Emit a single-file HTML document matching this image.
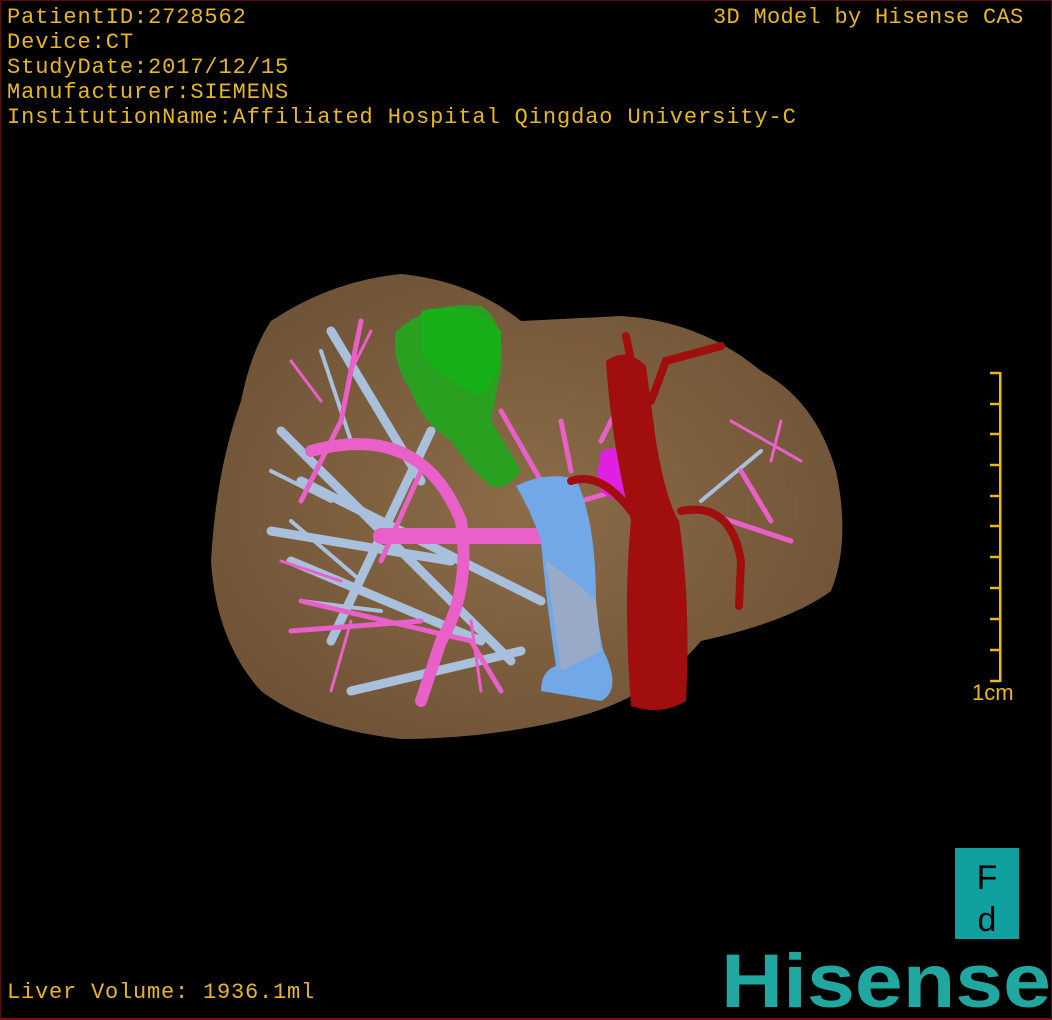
<!DOCTYPE html>
<html><head><meta charset="utf-8"><style>
html,body{margin:0;padding:0;background:#000;}
#f{position:relative;width:1052px;height:1020px;background:#000;overflow:hidden;box-sizing:border-box;border:1px solid #5a0e0e;border-bottom:2px solid #7a1010;}
.t{position:absolute;color:#e8b818;font-family:"Liberation Mono","DejaVu Sans Mono",monospace;font-size:22px;line-height:25px;white-space:pre;letter-spacing:0.9px;}
</style></head><body><div id="f">
<div class="t" style="left:6px;top:4px;">PatientID:2728562
Device:CT
StudyDate:2017/12/15
Manufacturer:SIEMENS
InstitutionName:Affiliated Hospital Qingdao University-C</div>
<div class="t" style="left:712px;top:4px;letter-spacing:0.3px;">3D Model by Hisense CAS</div>
<div class="t" style="left:6px;top:979px;letter-spacing:0.8px;">Liver Volume: 1936.1ml</div>
<svg width="1052" height="1020" style="position:absolute;left:0;top:0">
<defs><radialGradient id="lg" cx="0.5" cy="0.5" r="0.6"><stop offset="0" stop-color="#8c6c48"/><stop offset="1" stop-color="#6e5236"/></radialGradient></defs>
<path d="M270,320 Q330,280 400,273 Q470,280 520,320 Q560,318 620,315 Q700,320 760,370 Q815,400 835,470 Q850,540 830,590 Q790,620 700,640 Q650,700 560,720 Q480,738 400,738 Q310,728 260,690 Q215,640 210,560 Q215,470 240,400 Q250,350 270,320Z" fill="url(#lg)"/>
<g stroke="#a8c0dc" stroke-linecap="round" fill="none">
<path d="M330,640 L430,430 M280,430 L510,660 M300,480 L540,600 M330,330 L420,480 M290,560 L480,640 M350,690 L520,650 M270,530 L450,560" stroke-width="9"/>
<path d="M290,520 L360,580 M300,600 L380,610 M320,350 L350,440 M270,470 L330,500 M700,500 L760,450" stroke-width="4"/>
</g>
<g stroke="#e860c8" stroke-linecap="round" fill="none">
<path d="M310,450 Q420,420 460,520 Q470,590 440,640 L420,700" stroke-width="12"/>
<path d="M380,535 L540,535" stroke-width="16"/>
<path d="M360,320 L340,420 L300,500 M300,600 L470,640 L500,690 M290,630 L420,620 M420,470 L380,560 M500,410 L540,480 M560,420 L570,470 M630,380 L600,440 M700,510 L790,540 M740,470 L770,520 M580,500 L650,480" stroke-width="5"/>
<path d="M290,360 L320,400 M370,330 L350,370 M280,560 L340,580 M330,690 L350,620 M480,690 L470,620 M730,420 L800,460 M770,460 L780,420" stroke-width="3"/>
</g>
<path d="M600,450 Q630,440 640,460 L630,500 Q600,500 595,480Z" fill="#e020e0"/>
<path d="M395,330 Q430,300 480,305 Q505,320 500,370 L490,420 Q515,460 520,470 Q505,490 490,485 Q470,470 450,440 Q420,420 410,390 Q390,360 395,330Z" fill="#2aa020"/>
<path d="M420,310 Q470,298 500,330 Q500,380 480,395 Q440,380 420,350Z" fill="#18b018"/>
<path d="M515,485 Q545,470 575,478 Q595,520 595,600 Q600,650 605,655 Q620,690 600,700 Q570,695 540,690 Q540,670 555,665 Q545,600 540,540 Q530,510 515,485Z" fill="#72a8e8"/>
<path d="M545,560 Q575,580 595,600 L600,650 L560,670 Z" fill="#98aac8"/>
<path d="M605,360 Q625,345 645,365 L655,440 Q665,500 678,520 Q690,600 685,700 Q660,715 630,705 Q622,600 630,520 Q610,440 605,360Z" fill="#a00e0e"/>
<g stroke="#a00e0e" stroke-linecap="round" fill="none" stroke-width="8">
<path d="M625,335 L630,360 M650,400 L665,360 L720,345 M680,510 Q730,500 740,560 L738,605 M630,510 Q600,470 570,480"/>
</g>
<rect x="998" y="371" width="2.5" height="310" fill="#e8b818"/>
<g stroke="#e8b818" stroke-width="2.5">
<path d="M989,372H999M989,403H999M989,433H999M989,464H999M989,495H999M989,525H999M989,556H999M989,587H999M989,618H999M989,649H999M989,680H999"/>
</g>
<text x="971" y="699" fill="#e8b818" font-family="Liberation Sans,sans-serif" font-size="22">1cm</text>
<rect x="954" y="847" width="64" height="91" fill="#10a0a0"/>
<text x="986" y="888" fill="#000" font-family="Liberation Sans,sans-serif" font-size="34" text-anchor="middle">F</text>
<text x="986" y="930" fill="#000" font-family="Liberation Sans,sans-serif" font-size="34" text-anchor="middle">d</text>
<text x="720" y="1006" fill="#20a8a0" font-family="Liberation Sans,sans-serif" font-weight="bold" font-size="76" textLength="330" lengthAdjust="spacingAndGlyphs">Hisense</text>
</svg>
</div></body></html>
